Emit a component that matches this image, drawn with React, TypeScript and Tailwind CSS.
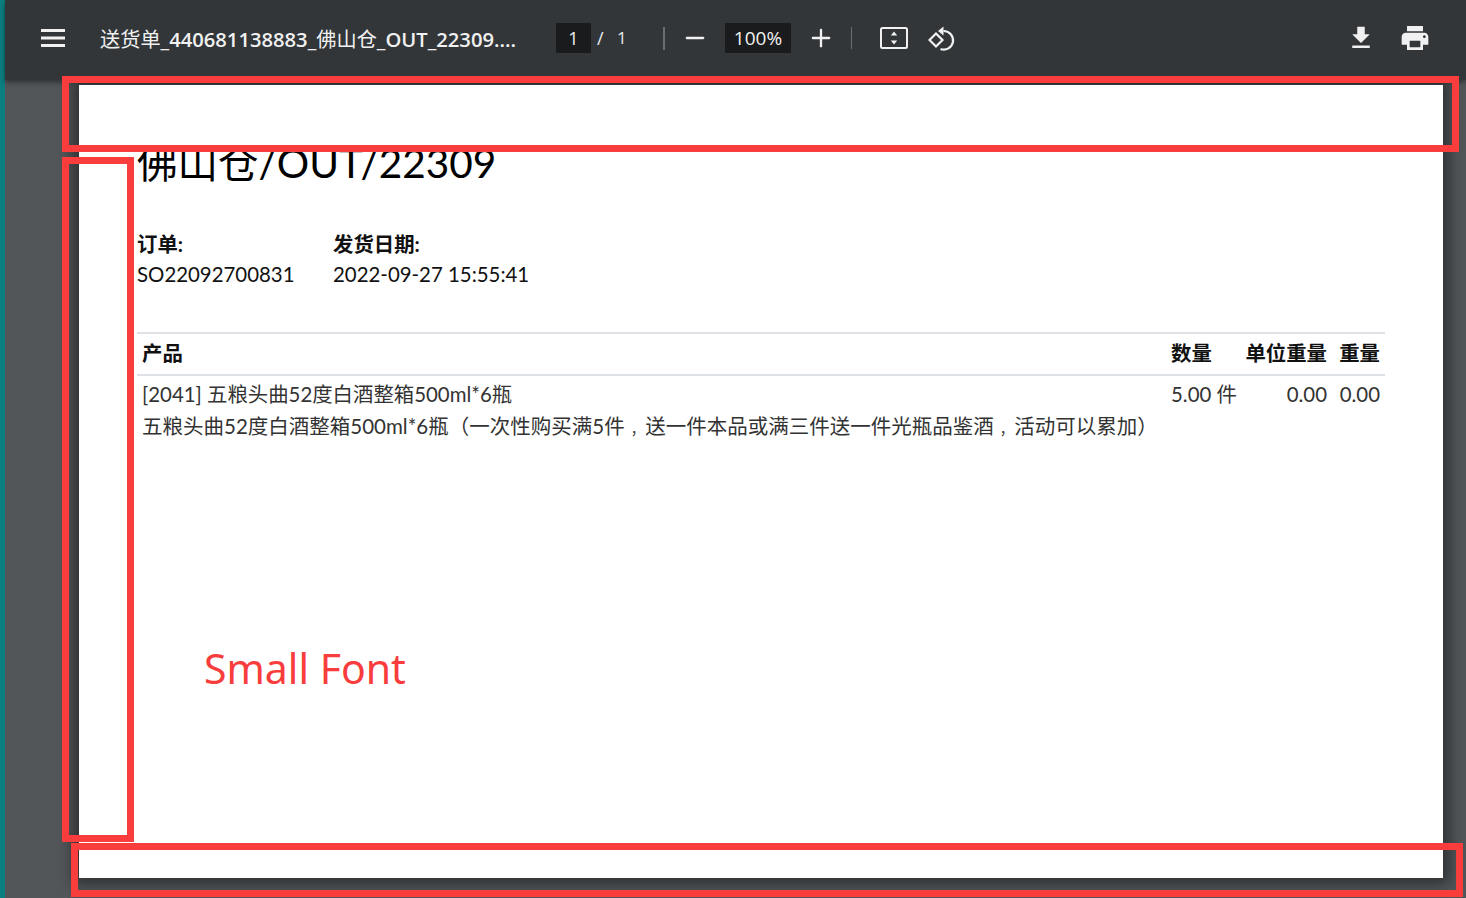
import { Minus, Plus } from "lucide-react";

const cjk = "font-['Lato','Noto_Sans_CJK_SC',sans-serif]";

function Comma() {
  // the screenshot's font puts the full-width comma in the middle of its cell
  return <span className="inline-block w-[20.5px] pl-[6px] text-[14px]">，</span>;
}

function Toolbar() {
  return (
    <div className="relative z-10 flex h-[80px] items-center bg-[#323639] pb-[4px] pl-[36px] pr-[35px] text-white shadow-[0_2px_5px_rgba(0,0,0,0.45)] font-['Open_Sans','Noto_Sans_CJK_SC',sans-serif]">
      <svg width="24" height="18" viewBox="0 0 24 18" className="shrink-0" fill="#f1f1f1">
        <rect y="0" width="24" height="3" />
        <rect y="7.5" width="24" height="3" />
        <rect y="15" width="24" height="3" />
      </svg>
      <div className="ml-[35px] w-[417px] shrink-0 translate-y-[1px] whitespace-nowrap text-[20.2px] leading-[28px] text-[#f1f1f1]">
        送货单<span className="font-semibold">_440681138883_</span>佛山仓<span className="font-semibold">_OUT_22309....</span>
      </div>
      <div className="ml-[39px] flex h-[30px] w-[35px] shrink-0 items-center justify-center bg-[#191b1c] text-[18px] text-[#f1f1f1]">1</div>
      <span className="ml-[6px] w-[14px] text-[18px] text-[#e8eaed]">/</span>
      <span className="ml-[6px] w-[10px] text-[17px] text-[#e8eaed]">1</span>
      <div className="ml-[36px] h-[23px] w-[2px] shrink-0 bg-[#6b6e71]" />
      <Minus size={28} strokeWidth={2} className="ml-[16px] shrink-0 text-[#f1f1f1]" />
      <div className="ml-[16px] flex h-[30px] w-[66px] shrink-0 items-center justify-center bg-[#191b1c] text-[19px] text-[#f1f1f1]">100%</div>
      <Plus size={28} strokeWidth={2} className="ml-[16px] shrink-0 text-[#f1f1f1]" />
      <div className="ml-[16px] h-[22px] w-[1px] shrink-0 bg-[#6b6e71]" />
      <svg width="30" height="24" viewBox="0 0 30 24" className="ml-[27px] shrink-0" fill="none">
        <rect x="2" y="2" width="26" height="20" rx="1.5" stroke="#f1f1f1" strokeWidth="2" />
        <path d="M15 5.500l3.200 4h-6.400zM15 18.500l-3.200-4h6.400z" fill="#f1f1f1" />
      </svg>
      <svg width="28" height="28" viewBox="0 0 28 28" className="ml-[19px] shrink-0" fill="none" stroke="#f1f1f1" strokeWidth="2.200">
        <path d="M8 9.500l6.500 6.500-6.500 6.500-6.500-6.500z" />
        <path d="M15.500 7A9.300 9.300 0 1 1 12.500 25" />
        <path d="M10 7l5.500-4.500v9z" fill="#f1f1f1" stroke="none" />
      </svg>
      <svg width="30" height="30" viewBox="0 0 24 24" className="ml-auto shrink-0" fill="#f1f1f1">
        <path d="M19 9h-4V3H9v6H5l7 7 7-7zM5 18v2h14v-2H5z" />
      </svg>
      <svg width="32" height="32" viewBox="0 0 24 24" className="ml-[23px] shrink-0" fill="#f1f1f1">
        <path d="M19 8H5c-1.660 0-3 1.340-3 3v6h4v4h12v-4h4v-6c0-1.660-1.340-3-3-3zm-3 11H8v-5h8v5zm3-7c-.55 0-1-.45-1-1s.45-1 1-1 1 .45 1 1-.45 1-1 1zm-1-9H6v4h12V3z" />
      </svg>
    </div>
  );
}

function Sheet() {
  return (
    <div className={`relative ml-[74px] mt-[5px] h-[793px] w-[1364px] overflow-hidden bg-white pl-[58px] pr-[58px] text-[#111] shadow-[0_0_14px_6px_rgba(0,0,0,0.45)] ${cjk}`}>
      {/* the blanked margin from the annotated screenshot, it cuts the heading */}
      <div className="absolute left-0 top-0 z-10 h-[60px] w-full bg-white" />
      <h2 className="mt-[52px] whitespace-nowrap text-[40.5px] leading-[52px] font-normal text-black">佛山仓/OUT/22309</h2>
      <div className="mt-[40px] flex text-[20.4px] leading-[30px]">
        <div className="w-[196px]">
          <div className="font-bold">订单:</div>
          <div>SO22092700831</div>
        </div>
        <div>
          <div className="font-bold">发货日期:</div>
          <div>2022-09-27 15:55:41</div>
        </div>
      </div>
      <table className="mt-[43px] w-[1248px] table-fixed border-t-2 border-[#dee2e6] text-[20.4px] leading-[30px]">
        <thead>
          <tr className="border-b-2 border-[#dee2e6] font-bold">
            <th className="w-[1029px] px-[5px] pb-[6px] pt-[4px] text-left font-bold">产品</th>
            <th className="w-[69px] px-[5px] pb-[6px] pt-[4px] text-left font-bold">数量</th>
            <th className="w-[97px] px-[5px] pb-[6px] pt-[4px] text-right font-bold whitespace-nowrap">单位重量</th>
            <th className="px-[5px] pb-[6px] pt-[4px] text-right font-bold">重量</th>
          </tr>
        </thead>
        <tbody className="text-[#333]">
          <tr className="align-top leading-[31px]">
            <td className="whitespace-nowrap px-[5px] pt-[3px]">
              <div>[2041] 五粮头曲52度白酒整箱500ml*6瓶</div>
              <div className="mt-[1px] text-[20.5px]">五粮头曲52度白酒整箱500ml*6瓶（一次性购买满5件<Comma />送一件本品或满三件送一件光瓶品鉴酒<Comma />活动可以累加）</div>
            </td>
            <td className="whitespace-nowrap px-[5px] pt-[3px]">5.00 件</td>
            <td className="px-[5px] pt-[3px] text-right">0.00</td>
            <td className="px-[5px] pt-[3px] text-right">0.00</td>
          </tr>
        </tbody>
      </table>
    </div>
  );
}

export default function App() {
  return (
    <div className="relative flex h-[898px] w-[1466px] overflow-hidden bg-[#525659]">
      <div className="w-[5px] shrink-0 bg-[#0b7f80]" />
      <div className="min-w-0 flex-1">
        <Toolbar />
        <Sheet />
      </div>

      {/* red annotation boxes drawn over the screenshot */}
      <div className="absolute left-[62px] top-[76px] z-20 h-[76px] w-[1397px] border-[7px] border-[#f93c3c]" />
      <div className="absolute left-[62px] top-[157px] z-20 h-[685px] w-[72px] border-[7px] border-[#f93c3c]" />
      <div className="absolute left-[71px] top-[843px] z-20 h-[54px] w-[1392px] border-[7px] border-[#f93c3c]" />
      <div className="absolute left-[204px] top-[641px] z-20 text-[41px] leading-[54px] text-[#f93c3c] font-['Noto_Sans',sans-serif]">Small Font</div>
    </div>
  );
}
